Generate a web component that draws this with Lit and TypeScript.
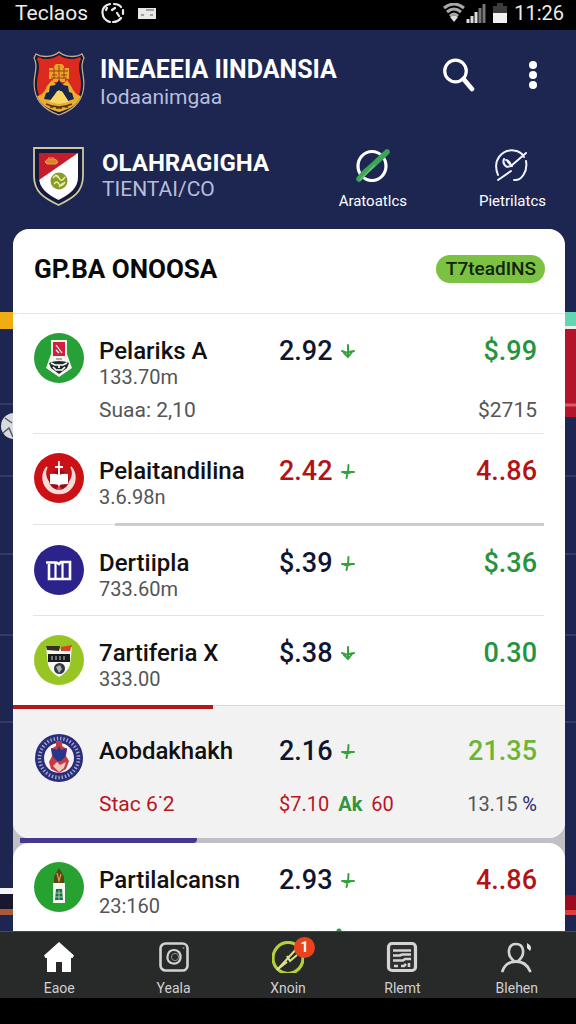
import { LitElement, html, svg, css, nothing } from "lit";
import { customElement, property } from "lit/decorators.js";
import { classMap } from "lit/directives/class-map.js";
import { styleMap } from "lit/directives/style-map.js";

const goldCrest = html`<svg viewBox="0 0 54 66" width="54" height="66" aria-hidden="true">
  <path d="M27 2C22 7 10 8 4 4L2 8C5 13 4 18 3 25C0 42 4 57 27 65C50 57 54 42 51 25C50 18 49 13 52 8L50 4C44 8 32 7 27 2Z" fill="#151a36" stroke="#c9a98b" stroke-width="1.3"/>
  <path d="M27 5C21 10 11 10 6 7L5 9C8 14 7 19 6 25C3 41 6 54 27 62C48 54 51 41 48 25C47 19 46 14 49 9L48 7C43 10 33 10 27 5Z" fill="#dc2a1f"/>
  <path d="M5 46Q12 45 15 36L20 30L25 36H30L35 30L39 36Q43 45 49 46C46 54 39 59 27 62C15 59 8 54 5 46Z" fill="#e9ae2d"/>
  <path d="M17 18h5v-2l2-2h6l2 2v2h5v11h-4v3h-12v-3h-4z" fill="#e8a52a"/>
  <path d="M17 21h19M20 25h5M29 25h6M27 15v16M19 28h16M22 18v11M32 18v11" stroke="#a23a16" stroke-width="1"/>
  <path d="M12 49l2-6 3-1 1-6 5-1 4-5 4 5 5 1 1 6 3 1 2 6-6 2-3-5-3-5h-5l-3 5-3 4z" fill="#18254c"/>
  <path d="M24 43l3-3 4 3 6 9-10 2-10-2z" fill="#f6d965"/>
  <path d="M14 54q13 6 26 0M18 57h3M24 58h6M33 57h3" fill="none" stroke="#5b3712" stroke-width="1.6"/>
</svg>`;

const whiteCrest = html`<svg viewBox="0 0 52 60" width="52" height="60" aria-hidden="true">
  <path d="M1 2H50V30C50 46 40 52 25.500 59C11 52 1 46 1 30Z" fill="#16183c" stroke="#cdc8a0" stroke-width="1.8"/>
  <path d="M6 7H45V31C45 42 37 48 25.500 54C14 48 6 42 6 31Z" fill="#fff"/>
  <path d="M6 7H45L6 34Z" fill="#c51c2b"/>
  <path d="M12 16q3-5 6-2 4-3 7 2l-2 2h-9zM15 12h6" fill="#d98130" stroke="#e9a63d" stroke-width="1"/>
  <circle cx="26" cy="35" r="8.500" fill="#8b9c25"/>
  <path d="M20 32q4-5 6 0t6-1M21 38q3-4 5 0t6-2M22 29l4 3M26 41l4-4" fill="none" stroke="#e9efb3" stroke-width="1.400"/>
</svg>`;

const emblems: Record<string, unknown> = {
  tower: svg`<circle cx="25" cy="25" r="25" fill="#27a038"/>
    <path d="M17 7H33L33 21L38 35L25 44L12 35L17 21Z" fill="#f4f5ee"/>
    <path d="M19 9H31V23H19Z" fill="#cf1f3c"/><path d="M22 12l6 8M22 17l3 3" stroke="#fff" stroke-width="1.200"/>
    <path d="M15 30q4-2 10-2t10 2l-2 5-8 6-8-6z" fill="#202a26"/>
    <path d="M17 30l4 2h8l4-2M19 34l3 3h6l3-3M25 32v3" fill="none" stroke="#fff" stroke-width="1.700"/>
    <path d="M22 26h6" stroke="#5f6c63" stroke-width="1"/>`,
  sword: svg`<circle cx="25" cy="25" r="25" fill="#cb1115"/>
    <path d="M13 14A16 16 0 1 0 37 14A13.500 14 0 1 1 13 14Z" fill="#f6dcd8" stroke="#f6dcd8" stroke-width="1.500"/>
    <circle cx="25" cy="27" r="10" fill="#8e1018"/>
    <path d="M16 21q5-1 9 1q4-2 9-1v10q-5 0-9 1q-4-1-9-1z" fill="#fff"/>
    <path d="M25 8V37M21 14H29" stroke="#fff" stroke-width="1.800"/><path d="M25 32l-3 5h6z" fill="#e0474a"/>`,
  book: svg`<circle cx="25" cy="25" r="25" fill="#2b238b"/>
    <path d="M12 17.500H22.500L25 19L27 17H36V34H15V19" fill="none" stroke="#fff" stroke-width="2.600"/>
    <path d="M21.500 18V33M28.500 18V33" stroke="#fff" stroke-width="2.200"/>`,
  shield: svg`<circle cx="25" cy="25" r="25" fill="#97c524"/>
    <path d="M12 12Q25 17 38 12L36 30Q33 38 25 42Q17 38 14 30Z" fill="#f8f9f3"/>
    <path d="M12 11h14l-1 5-12-1z" fill="#3d2e24"/><path d="M27 12l11-2-2 6h-9z" fill="#df4128"/>
    <path d="M14 19H36V27H14Z" fill="#191c1c"/><path d="M18 21v4M22 21v4M26 21v4M30 21v4" stroke="#c9cec9" stroke-width="1"/>
    <circle cx="25.500" cy="33.500" r="5.500" fill="#313a40"/><path d="M22 32l4-2 2 4-3 4" fill="#aab1b5"/>`,
  seal: svg`<circle cx="25" cy="25" r="24" fill="#2a2e79"/>
    <circle cx="25" cy="25" r="19.500" fill="none" stroke="#a3a8d0" stroke-width="3.600" stroke-dasharray="1.400 1.900"/>
    <circle cx="25" cy="25" r="15" fill="#f7f3f4"/>
    <path d="M22 8h6v5l5 3-1 7 3 5-3 8-7 4-8-4-2-7 3-6-1-7 5-3z" fill="#c43a43"/>
    <path d="M17 15l6 2 2-4 2 4 6-2-2 9-4 4h-4l-4-4z" fill="#27358b"/>
    <path d="M19 33l4-4 3 3 6-3-2 6-5 4z" fill="#f2c7bd"/>`,
  lantern: svg`<circle cx="25" cy="25" r="25" fill="#27a12f"/>
    <path d="M25 6l3 5 2 4v6H20v-6l2-4z" fill="#5c4318"/><path d="M23 11l2 8 2-7" fill="none" stroke="#d39b40" stroke-width="1.300"/>
    <path d="M19 21H31V41H19Z" fill="#f4f8f1"/>
    <path d="M22 27H28L29 38H21Z" fill="#197044"/><path d="M21 31h8M21 35h8M25 28v10" stroke="#b7dbc1" stroke-width=".8"/>`,
};

interface Team {
  emblem: string;
  name: string;
  meta?: string;
  odds: string;
  oddsTone?: string;
  value: string;
  tone: string;
  down?: boolean;
  line?: string;
}

const teams: Team[] = [
  { emblem: "tower", name: "Pelariks A", meta: "133.70m", odds: "2.92", value: "$.99", tone: "green", down: true, line: "thin" },
  { emblem: "sword", name: "Pelaitandilina", meta: "3.6.98n", odds: "2.42", oddsTone: "red", value: "4..86", tone: "red", line: "thick" },
  { emblem: "book", name: "Dertiipla", meta: "733.60m", odds: "$.39", value: "$.36", tone: "green", line: "thin" },
  { emblem: "shield", name: "7artiferia X", meta: "333.00", odds: "$.38", value: "0.30", tone: "green", down: true },
  { emblem: "seal", name: "Aobdakhakh", odds: "2.16", value: "21.35", tone: "lime" },
  { emblem: "lantern", name: "Partilalcansn", meta: "23:160", odds: "2.93", value: "4..86", tone: "red" },
];

@customElement("odds-row")
export class OddsRow extends LitElement {
  @property({ attribute: false }) team!: Team;

  static styles = css`
    :host {
      display: grid;
      grid-template-columns: 66px minmax(0, 180fr) minmax(0, 258fr);
      box-sizing: border-box;
      min-height: 89px;
      padding: 19px 7px 11px 0;
    }
    .emblem { display: block; margin-left: 1px; }
    .info, .figures { padding-top: 4px; min-width: 0; white-space: nowrap; }
    .name { margin: 0; font-size: 24px; line-height: 28px; font-weight: 500; color: #111; }
    .meta { font-size: 20px; line-height: 24px; color: #555; }
    .line { display: flex; justify-content: space-between; align-items: center; }
    .odds { display: flex; align-items: center; gap: 8px; font-size: 27px; line-height: 28px; font-weight: 500; color: #11152f; }
    .value { font-size: 27px; line-height: 28px; font-weight: 500; }
    .green { color: #26933f; }
    .lime { color: #6db536; }
    .red { color: #b31217; }
  `;

  render() {
    const t = this.team;
    return html`
      <svg class="emblem" viewBox="0 0 50 50" width="50" height="50" aria-hidden="true">${emblems[t.emblem]}</svg>
      <div class="info">
        <h3 class="name">${t.name}</h3>
        ${t.meta ? html`<div class="meta">${t.meta}</div>` : nothing}
        <slot name="note"></slot>
      </div>
      <div class="figures">
        <div class="line">
          <span class=${classMap({ odds: true, red: t.oddsTone === "red" })}>${t.odds}
            <svg viewBox="0 0 14 16" width="14" height="16" aria-hidden="true">
              <path d=${t.down ? "M7 2V14M1 8L5 9.500L13 8M3 10L7 14L11 9" : "M7.500 2L7 9L5.500 15M1 9H13M2 9L6 11L10 9"}
                fill="none" stroke="#36a13c" stroke-width="2" stroke-linecap="round"/>
            </svg>
          </span>
          <span class="value ${t.tone}">${t.value}</span>
        </div>
        <slot name="extra"></slot>
      </div>
    `;
  }
}

const navItems = [
  { label: "Eaoe", icon: svg`<path d="M16 1L31 14.500L29.500 17H28V31H19V21H13V31H4V17H2.500L1 14.500Z" fill="#fff"/>` },
  { label: "Yeala", icon: svg`<rect x="2.500" y="2.500" width="27" height="27" rx="5" fill="none" stroke="#d2d2d2" stroke-width="2.600"/>
    <path d="M16 9C21 9 23 13 22.500 17C22 21 19 23 15 22.500C11 22 9 19 9.500 15.500C10 11.500 12 9 16 9Z" fill="none" stroke="#d2d2d2" stroke-width="2.200"/>
    <circle cx="17" cy="16" r="3.600" fill="none" stroke="#8f8f8f" stroke-width="1"/><circle cx="25.500" cy="7" r="1" fill="#888"/>` },
  { label: "Xnoin", badge: "1", icon: svg`<ellipse cx="16" cy="17" rx="15" ry="15.500" fill="none" stroke="#b5cf3a" stroke-width="3.200"/>
    <path d="M5 29L28 4M6 28L15 21M15 15L18 20L25 14" fill="none" stroke="#dfe28a" stroke-width="2"/>` },
  { label: "Rlemt", icon: svg`<rect x="2.500" y="2.500" width="27" height="27" rx="3.500" fill="#303030" stroke="#d4d4d4" stroke-width="3.200"/>
    <path d="M7 9.500H25M7 14.500H14L16 13.500H25M7 19.500H17L19 18H25M8 25H12M15 25H18L20 23M23 22V26" fill="none" stroke="#d4d4d4" stroke-width="2.600"/>` },
  { label: "Blehen", icon: svg`<path d="M13 20C5 14 7 3 15 3C23 3 25 14 17 20" fill="none" stroke="#d4d4d4" stroke-width="2.600"/>
    <path d="M1.500 30C4 23 9 20.500 15 20.500S26 23 29 30" fill="none" stroke="#d4d4d4" stroke-width="2.800" stroke-linecap="round"/>
    <path d="M26 2q6 3 3 8l-3-3z" fill="#e4e4e4"/>` },
];

@customElement("app-root")
export class AppRoot extends LitElement {
  static styles = css`
    :host {
      display: flex;
      flex-direction: column;
      height: 100vh;
      overflow: hidden;
      position: relative;
      background: #1d2551;
      color: #111;
      font-family: Roboto, "Liberation Sans", sans-serif;
    }
    button, a { font: inherit; color: inherit; text-decoration: none; }
    button { background: none; border: 0; padding: 0; cursor: pointer; }
    svg { display: block; }
    .status {
      flex: none; display: flex; align-items: center; height: 30px; padding: 0 12px 4px 15px;
      box-sizing: border-box; background: #000; color: #ececec; font-size: 21px; line-height: 26px;
    }
    .status-left { display: flex; align-items: center; gap: 13px; flex: 1; }
    .status-right { display: flex; align-items: center; gap: 7px; font-size: 20px; }
    .signals { display: flex; gap: 1px; }
    .head { flex: none; padding: 20px 28px 0 32px; color: #fff; }
    .brand { display: flex; align-items: flex-start; gap: 14px; height: 96px; }
    .brand-text { flex: 1; min-width: 0; padding-top: 5px; white-space: nowrap; }
    h1, .sub-title { margin: 0; font-size: 25px; line-height: 30px; font-weight: 700; }
    .tagline { margin: 0; font-size: 21px; line-height: 24px; color: #b6bddb; }
    .tools { display: flex; gap: 43px; padding: 8px 0 0; }
    .sub { display: flex; align-items: flex-start; gap: 17px; height: 83px; padding: 0 2px 0 1px; }
    .sub .brand-text { padding-top: 3px; }
    .sub .sub-title { font-size: 24px; line-height: 28px; }
    .quick { display: flex; gap: 72px; }
    .quick button { display: flex; flex-direction: column; align-items: center; gap: 8px; font-size: 15px; line-height: 22px; }
    .list { flex: 1; min-height: 0; margin: 0 11px 0 13px; position: relative; overflow: hidden; border-radius: 16px 16px 0 0; background: #bfbfc4; }
    .card { background: #fff; border-radius: 16px; overflow: hidden; }
    .next { min-height: 120px; background: radial-gradient(circle at 326px 88px, #2b9b55 2px, #fff 3px); }
    .card-head { display: flex; justify-content: space-between; align-items: center; padding: 0 20px 4px 21px; height: 80px; border-bottom: 1px solid #e6e8eb; }
    h2 { margin: 0; font-size: 26px; line-height: 32px; font-weight: 700; color: #0a0a0a; }
    .chip { padding: 0 9px 0 10px; border-radius: 14px; background: #7cc242; font-size: 19px; line-height: 28px; font-weight: 500; color: #10240b; }
    ul { list-style: none; margin: 0; padding: 0; }
    .rows { padding: 0 21px 0 20px; }
    .rule { height: 1px; background: #e3e4e8; }
    .rule.thick { height: 3px; background: linear-gradient(#e3e4e8, #e3e4e8) left 1px / 100% 1px no-repeat; }
    .bar { height: 100%; margin-left: auto; background: #cdcdcd; }
    .split { height: 4px; background: linear-gradient(#dadada 1px, #f2f2f3 1px); }
    .split .bar { margin: 0; background: #b01a1c; }
    .active { background: #f2f2f3; padding-top: 5px; padding-bottom: 11px; }
    .gap { height: 5px; }
    .gap .bar { margin: 0 0 0 7px; background: #45388f; border-radius: 0 0 4px 0; }
    .small { display: block; font-size: 21px; line-height: 24px; color: #555; }
    .note { margin-top: 9px; }
    .under { text-align: right; margin-top: 33px; }
    .crimson { color: #b9151f; }
    .stat { margin-top: 27px; }
    .pair { display: flex; justify-content: space-between; font-size: 20px; }
    .trend { color: #34953a; font-weight: 700; margin: 0 4px; }
    .percent { color: #26266f; }
    nav { flex: none; display: flex; height: 67px; padding: 0 2px; background: #282a2a; border-top: 1px solid #494949; box-sizing: border-box; }
    nav a { flex: 1; display: flex; flex-direction: column; align-items: center; padding-top: 9px; gap: 4px; color: #d0d0d0; font-size: 14px; line-height: 22px; }
    .icon { position: relative; }
    .badge { position: absolute; left: 22px; top: -4px; width: 21px; height: 21px; border-radius: 50%; background: #e9431e; color: #fff; font-size: 14px; line-height: 21px; font-weight: 700; text-align: center; }
    .foot { flex: none; height: 26px; background: #000; }
    .scene { position: absolute; top: 0; }
    .scene.west { left: 0; }
    .scene.east { right: 0; }
    .status, .head, nav, .foot { position: relative; }
  `;

  private row(t: Team, extra: unknown = nothing) {
    return html`<odds-row .team=${t}>${extra}</odds-row>`;
  }

  private rule(t: Team) {
    if (t.line === "thin") return html`<div class="rule"></div>`;
    if (t.line === "thick") return html`<div class="rule thick"><div class="bar" style=${styleMap({ width: "84%" })}></div></div>`;
    return nothing;
  }

  render() {
    return html`
      <svg class="scene west" viewBox="0 0 14 1024" width="14" height="1024" aria-hidden="true">
        <path d="M0 312H14V329H0Z" fill="#efac15"/>
        <path d="M0 404H14M0 476H14M0 554H14M0 635H14M0 722H14" stroke="#343b69" stroke-width="2"/>
        <circle cx="14" cy="426" r="13" fill="#d8dadd"/><path d="M5 418l7 5M3 433l6-5 4 9" stroke="#555b66" stroke-width="1.500" fill="none"/>
        <path d="M0 888H14V894H0Z" fill="#f4f4f6"/><path d="M0 894H14V909H0Z" fill="#17182f"/><path d="M0 909H14V915H0Z" fill="#a95a39"/>
      </svg>
      <svg class="scene east" viewBox="0 0 14 1024" width="14" height="1024" aria-hidden="true">
        <path d="M0 312H14V326H0Z" fill="#62d6b2"/><path d="M0 326H14V329H0Z" fill="#eee"/>
        <path d="M0 329H14V417H0Z" fill="#b3142a"/><path d="M0 405H14" stroke="#e0566a" stroke-width="3"/>
        <path d="M0 476H14M0 554H14M0 635H14M0 722H14" stroke="#343b69" stroke-width="2"/>
        <path d="M0 895H14V910H0Z" fill="#9d0b20"/><path d="M0 910H14V915H0Z" fill="#dd3d3d"/>
      </svg>

      <div class="status">
        <div class="status-left">
          <span>Teclaos</span>
          <svg viewBox="0 0 24 22" width="24" height="22" aria-hidden="true">
            <path d="M9 2Q1 4 1.500 11Q2 18 9 20M13 2Q18 2 20 5M22 8V12M20 16Q17 20 12 20M11 8L14 6M16 11L18 14M6 6L5 8" fill="none" stroke="#ececec" stroke-width="2.200" stroke-linecap="round"/>
          </svg>
          <svg viewBox="0 0 18 12" width="18" height="12" aria-hidden="true"><path d="M0 1H18V12H0Z" fill="#e8e8e8"/><path d="M3 8h3M12 8h3M8 3h8" stroke="#888" stroke-width="1.600"/></svg>
        </div>
        <div class="status-right">
          <div class="signals">
            <svg viewBox="0 0 22 20" width="22" height="20" aria-hidden="true">
              <path d="M1 5Q11-3 21 5M4 9Q11 3 18 9M7 13Q11 9 15 13" fill="none" stroke="#a9a9a9" stroke-width="3"/><path d="M11 19l-4-5q4-3 8 0z" fill="#ddd"/>
            </svg>
            <svg viewBox="0 0 20 20" width="20" height="20" aria-hidden="true"><path d="M2 20v-4M6 20v-7M10 20V9" stroke="#ddd" stroke-width="3"/><path d="M14 20V5M18 20V1" stroke="#777" stroke-width="3"/></svg>
          </div>
          <svg viewBox="0 0 14 20" width="14" height="20" aria-hidden="true"><path d="M4 0H10V3H14V10H0V3H4Z" fill="#3c3c3c"/><path d="M0 10H14V20H0Z" fill="#f2f2f2"/></svg>
          <time>11:26</time>
        </div>
      </div>

      <header class="head">
        <div class="brand">
          ${goldCrest}
          <div class="brand-text">
            <h1>INEAEEIA IINDANSIA</h1>
            <p class="tagline">Iodaanimgaa</p>
          </div>
          <div class="tools">
            <button aria-label="Search">
              <svg viewBox="0 0 32 34" width="32" height="34" aria-hidden="true"><circle cx="12.500" cy="13" r="10.800" fill="none" stroke="#fff" stroke-width="3.200"/><path d="M20.500 21L29 31" stroke="#fff" stroke-width="4.600" stroke-linecap="round"/></svg>
            </button>
            <button aria-label="More">
              <svg viewBox="0 0 30 34" width="30" height="34" aria-hidden="true"><g fill="#fff"><circle cx="15" cy="7" r="4"/><circle cx="15" cy="17" r="4"/><circle cx="15" cy="27" r="4"/></g></svg>
            </button>
          </div>
        </div>
        <div class="sub">
          ${whiteCrest}
          <div class="brand-text">
            <p class="sub-title">OLAHRAGIGHA</p>
            <p class="tagline">TIENTAI/CO</p>
          </div>
          <div class="quick">
            <button>
              <svg viewBox="0 0 36 36" width="36" height="36" aria-hidden="true"><ellipse cx="17" cy="20" rx="14" ry="14.500" fill="none" stroke="#fff" stroke-width="3.200"/><path d="M4 33Q10 25 17 20L32 6" fill="none" stroke="#3aa656" stroke-width="5.500" stroke-linecap="round"/><path d="M5 34L20 19" stroke="#6fbd7e" stroke-width="1.600"/></svg>
              <span>Aratoatlcs</span>
            </button>
            <button>
              <svg viewBox="0 0 36 36" width="36" height="36" aria-hidden="true"><path d="M4 29C-2 14 8 3 20 4.500C25 5 29 8 30 11M32 15C34 26 27 35 20 34M4 34L17 25M17 20L32 7M10 13Q8 18 13 21L17 20Q16 15 12 14M14 16L18 20" fill="none" stroke="#f2f4ff" stroke-width="2" stroke-linecap="round"/></svg>
              <span>Pietrilatcs</span>
            </button>
          </div>
        </div>
      </header>

      <main class="list">
        <section class="card">
          <div class="card-head">
            <h2>GP.BA ONOOSA</h2>
            <span class="chip">T7teadINS</span>
          </div>
          <ul>
            <li class="rows">${this.row(teams[0], html`<span slot="note" class="small note">Suaa: 2,10</span><span slot="extra" class="small under">$2715</span>`)}${this.rule(teams[0])}</li>
            ${teams.slice(1, 4).map((t) => html`<li class="rows">${this.row(t)}${this.rule(t)}</li>`)}
            <li>
              <div class="split"><div class="bar" style=${styleMap({ width: "36.3%" })}></div></div>
              <div class="rows active">
                ${this.row(teams[4], html`<span slot="note" class="small crimson stat">Stac 6˙2</span>
                  <span slot="extra" class="small stat pair"><span class="crimson">$7.10 <span class="trend">Ak</span> 60</span><span>13.15 <span class="percent">%</span></span></span>`)}
              </div>
            </li>
          </ul>
        </section>
        <div class="gap"><div class="bar" style=${styleMap({ width: "32%" })}></div></div>
        <section class="card next">
          <ul><li class="rows">${this.row(teams[5])}</li></ul>
        </section>
      </main>

      <nav aria-label="Main">
        ${navItems.map((n) => html`<a href="#">
          <span class="icon"><svg viewBox="0 0 32 32" width="32" height="32" aria-hidden="true">${n.icon}</svg>
            ${n.badge ? html`<span class="badge">${n.badge}</span>` : nothing}</span>
          <span>${n.label}</span></a>`)}
      </nav>
      <div class="foot"></div>
    `;
  }
}
